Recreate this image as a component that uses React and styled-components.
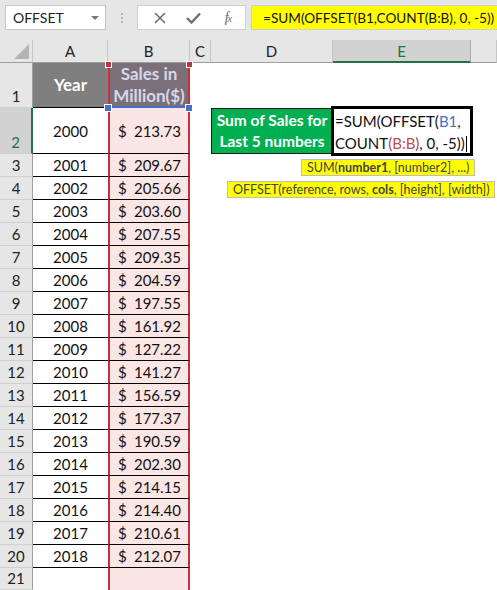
import React from "react";
import styled, { createGlobalStyle } from "styled-components";

const GlobalStyle = createGlobalStyle`
  html, body {
    margin: 0;
    padding: 0;
    background: #e6e6e6;
    overflow: hidden;
  }
  body {
    font-family: "Lato", "Liberation Sans", sans-serif;
  }
`;

const Window = styled.div`
  width: 497px;
  height: 590px;
  overflow: hidden;
  background: #e6e6e6;
`;

const FormulaBar = styled.div`
  height: 40px;
  display: flex;
  align-items: flex-start;
  padding: 5px 0 0 5px;
  box-sizing: border-box;
`;

const NameBox = styled.div`
  width: 101px;
  height: 25px;
  box-sizing: border-box;
  background: #fff;
  border: 1px solid #c6c6c6;
  display: flex;
  align-items: center;
  justify-content: space-between;
  padding: 0 6px 0 7px;
  font-size: 14px;
  color: #222;
`;

const DropArrow = styled.span`
  width: 0;
  height: 0;
  border-left: 4px solid transparent;
  border-right: 4px solid transparent;
  border-top: 4px solid #777;
  margin-top: 1px;
`;

const Grip = styled.div`
  width: 31px;
  height: 25px;
  display: flex;
  flex-direction: column;
  align-items: center;
  justify-content: center;
  gap: 2px;

  span {
    width: 2px;
    height: 2px;
    background: #b4b4b4;
  }
`;

const FxButtons = styled.div`
  width: 109px;
  height: 25px;
  box-sizing: border-box;
  background: #fff;
  border: 1px solid #d0d0d0;
  display: flex;
  align-items: center;
  justify-content: space-around;
  padding: 0 4px 0 6px;
`;

const FxLabel = styled.span`
  font-family: "Liberation Serif", serif;
  font-style: italic;
  font-size: 14px;
  color: #666;
  letter-spacing: -1px;
  margin-left: 4px;

  sub {
    font-size: 10px;
    vertical-align: 0;
  }
`;

const FormulaInput = styled.div`
  margin-left: 5px;
  flex: 1;
  height: 25px;
  box-sizing: border-box;
  background: #ffff00;
  border: 1px solid #d0d0d0;
  border-right: none;
  display: flex;
  align-items: center;
  padding-left: 11px;
  font-size: 13.6px;
  color: #111;
  white-space: nowrap;
`;

const Sheet = styled.div`
  position: relative;
  display: grid;
  grid-template-columns: 33px 75px 82px 21px 122px 138px 26px;
  grid-template-rows: 23px 45px 46px repeat(18, 23px) 22px;
  background: #fff;
  font-size: 15px;
  color: #111;
`;

const ColHead = styled.div`
  box-sizing: border-box;
  display: flex;
  align-items: center;
  justify-content: center;
  position: relative;
  background: ${(p) => (p.$active ? "#d2d2d2" : "#e6e6e6")};
  color: ${(p) => (p.$active ? "#217346" : "#222")};
  border-right: 1px solid ${(p) => (p.$active ? "#ababab" : "#c6c6c6")};
  border-bottom: ${(p) => (p.$active ? "2px solid #217346" : "1px solid #9e9e9e")};
  font-size: 15px;
`;

const CornerMark = styled.span`
  position: absolute;
  right: 3px;
  bottom: 3px;
  width: 0;
  height: 0;
  border-left: 15px solid transparent;
  border-bottom: 15px solid #b4b4b4;
`;

const RowHead = styled.div`
  box-sizing: border-box;
  display: flex;
  align-items: flex-end;
  justify-content: center;
  padding-bottom: 2px;
  background: ${(p) => (p.$active ? "#d2d2d2" : "#e6e6e6")};
  color: ${(p) => (p.$active ? "#217346" : "#222")};
  border-right: ${(p) => (p.$active ? "2px solid #217346" : "1px solid #9e9e9e")};
  border-bottom: 1px solid #d0d0d0;
`;

const YearCell = styled.div`
  box-sizing: border-box;
  display: flex;
  align-items: center;
  justify-content: center;
  background: #fff;
  border-bottom: ${(p) => (p.$last ? "none" : "1px solid #000")};
`;

const MoneyCell = styled.div`
  box-sizing: border-box;
  display: flex;
  align-items: center;
  justify-content: space-between;
  padding: 0 7px 0 8px;
  background: #fbe6e6;
  border-left: 2px solid #c4323b;
  border-right: 2px solid #c4323b;
  border-bottom: ${(p) => (p.$last ? "none" : "1px solid #000")};
`;

const TitleCell = styled.div`
  box-sizing: border-box;
  display: flex;
  align-items: center;
  justify-content: center;
  text-align: center;
  font-weight: 700;
  font-size: 17px;
  line-height: 22px;
  background: ${(p) => p.$bg};
  color: ${(p) => p.$fg};
  border-bottom: 1px solid #000;
`;

const RangeTitle = styled(TitleCell)`
  border-left: 2px solid #c4323b;
  border-right: 2px solid #c4323b;
  border-bottom: 2px solid #4472c4;
`;

const Blank = styled.div`
  background: #fff;
`;

const LabelCell = styled.div`
  box-sizing: border-box;
  display: flex;
  align-items: center;
  justify-content: center;
  text-align: center;
  background: #00b050;
  border: 1px solid #1e1e1e;
  color: #fff;
  font-weight: 700;
  font-size: 15.5px;
  line-height: 21px;
`;

const EditCell = styled.div`
  box-sizing: border-box;
  position: relative;
  z-index: 2;
  background: #fff;
  border: 1px solid #000;
  box-shadow: 0 0 0 2px #000;
  padding: 1px 0 0 1px;
  font-size: 15px;
  line-height: 22px;
  white-space: nowrap;
`;

const Ref = styled.span`
  color: ${(p) => p.$c};
`;

const Caret = styled.span`
  display: inline-block;
  width: 1px;
  height: 16px;
  background: #000;
  vertical-align: -3px;
  margin-left: 1px;
`;

const Handle = styled.span`
  position: absolute;
  z-index: 3;
  width: ${(p) => p.$size}px;
  height: ${(p) => p.$size}px;
  background: ${(p) => p.$c};
  border: 1px solid #fff;
`;

const Tip = styled.div`
  position: absolute;
  z-index: 4;
  height: 17px;
  box-sizing: border-box;
  background: #ffff00;
  border: 1px solid #bdbdbd;
  padding: 0 5px;
  font-size: 12.5px;
  line-height: 15px;
  color: #444;
  white-space: nowrap;

  b {
    font-weight: 700;
  }
`;

const sales = [
  213.73, 209.67, 205.66, 203.6, 207.55, 209.35, 204.59, 197.55, 161.92,
  127.22, 141.27, 156.59, 177.37, 190.59, 202.3, 214.15, 214.4, 210.61, 212.07,
];

const columns = ["", "A", "B", "C", "D", "E", ""];

function DataRow({ row, year, value, children }) {
  return (
    <>
      <RowHead $active={row === 2}>{row}</RowHead>
      <YearCell $last={!year}>{year}</YearCell>
      <MoneyCell $last={value === undefined}>
        {value !== undefined && (
          <>
            <span>$</span>
            <span>{value.toFixed(2)}</span>
          </>
        )}
      </MoneyCell>
      <Blank />
      {children || (
        <>
          <Blank />
          <Blank />
        </>
      )}
      <Blank />
    </>
  );
}

export default function App() {
  return (
    <Window>
      <GlobalStyle />
      <FormulaBar>
        <NameBox>
          OFFSET
          <DropArrow />
        </NameBox>
        <Grip>
          <span />
          <span />
          <span />
        </Grip>
        <FxButtons>
          <svg width="12" height="12" viewBox="0 0 12 12">
            <path d="M1 1 L11 11 M11 1 L1 11" stroke="#6e6e6e" strokeWidth="1.6" />
          </svg>
          <svg width="15" height="12" viewBox="0 0 15 12">
            <path d="M1 6 L5.5 10.5 L14 1.5" stroke="#6e6e6e" strokeWidth="2.4" fill="none" />
          </svg>
          <FxLabel>
            f<sub>x</sub>
          </FxLabel>
        </FxButtons>
        <FormulaInput>=SUM(OFFSET(B1,COUNT(B:B), 0, -5))</FormulaInput>
      </FormulaBar>

      <Sheet>
        {columns.map((c, i) => (
          <ColHead key={i} $active={c === "E"}>
            {i === 0 && <CornerMark />}
            {c}
          </ColHead>
        ))}

        <RowHead>1</RowHead>
        <TitleCell $bg="#7f7f7f" $fg="#fff">
          Year
        </TitleCell>
        <RangeTitle $bg="#7b6f78" $fg="#d9d7ea">
          Sales in
          <br />
          Million($)
        </RangeTitle>
        <Blank />
        <Blank />
        <Blank />
        <Blank />

        {sales.map((v, i) => (
          <DataRow key={i} row={i + 2} year={2000 + i} value={v}>
            {i === 0 && (
              <>
                <LabelCell>
                  Sum of Sales for
                  <br />
                  Last 5 numbers
                </LabelCell>
                <EditCell>
                  =SUM(OFFSET(<Ref $c="#4472c4">B1</Ref>,
                  <br />
                  COUNT<Ref $c="#9b3c8c">(</Ref>
                  <Ref $c="#c0504d">B:B</Ref>
                  <Ref $c="#9b3c8c">)</Ref>, 0, -5))
                  <Caret />
                </EditCell>
              </>
            )}
          </DataRow>
        ))}
        <DataRow row={21} />

        <Handle $c="#c4323b" $size={5} style={{ left: 105, top: 21 }} />
        <Handle $c="#c4323b" $size={5} style={{ left: 186, top: 21 }} />
        <Handle $c="#4472c4" $size={6} style={{ left: 104, top: 64 }} />
        <Handle $c="#4472c4" $size={6} style={{ left: 185, top: 64 }} />

        <Tip style={{ left: 301, top: 119 }}>
          SUM(<b>number1</b>, [number2], ...)
        </Tip>
        <Tip style={{ left: 227, top: 141 }}>
          OFFSET(reference, rows, <b>cols</b>, [height], [width])
        </Tip>
      </Sheet>
    </Window>
  );
}
